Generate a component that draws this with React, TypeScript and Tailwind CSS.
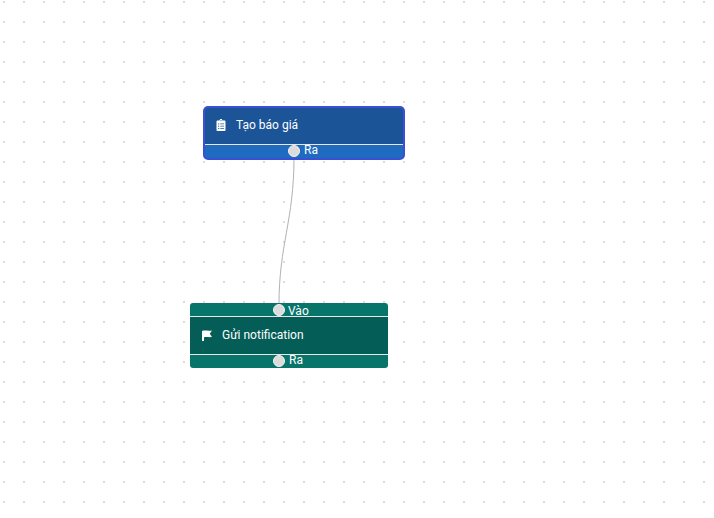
import { FaClipboardList } from "react-icons/fa";

const Handle = ({
  label,
  circleClass = "",
  labelClass = "ml-[4px]",
}: {
  label: string;
  circleClass?: string;
  labelClass?: string;
}) => (
  <div className="flex h-[13px] items-start pl-[83px]">
    <span className={`h-[12px] w-[12px] shrink-0 rounded-full border border-[#f3f3f3] bg-[#dcdcdc] ${circleClass}`} />
    <span className={`text-xs font-[450] leading-[11px] text-white ${labelClass}`}>{label}</span>
  </div>
);

const App = () => {
  return (
    <div className="relative h-[518px] w-[714px] overflow-hidden bg-white bg-[radial-gradient(circle,#dddddd_1px,transparent_1.2px)] bg-[length:20px_20px] bg-[position:-6px_-8px] font-['Roboto',sans-serif]">
      <svg className="absolute left-0 top-0" width="714" height="518">
        <path d="M294 158 C294 220 279 245 279 304" fill="none" stroke="#b1b1b7" strokeWidth="1" />
      </svg>

      <div className="absolute left-[203px] top-[106px] w-[202px] overflow-hidden rounded-[5px] border-2 border-[#3a4fd6] bg-[#1f6bbf]">
        <div className="flex h-[36px] items-center bg-[#1c5498] pb-[2px] pl-[10px] text-xs font-[450] text-white">
          <FaClipboardList className="h-[12px] w-[12px]" />
          <span className="ml-[9px]">Tạo báo giá</span>
        </div>
        <div className="h-[14px] border-t border-[#e8e8e8]">
          <Handle label="Ra" />
        </div>
      </div>

      <div className="absolute left-[190px] top-[303px] w-[198px] overflow-hidden rounded-[3px] bg-[#08756b]">
        <div className="h-[13px]">
          <Handle label="Vào" circleClass="mt-[1px]" labelClass="ml-[3px] mt-[3px]" />
        </div>
        <div className="flex h-[39px] items-center border-y border-[#e8e8e8] bg-[#045d56] pl-[12px] text-xs font-[450] text-white">
          <svg width="10" height="11" viewBox="0 0 10 11" fill="currentColor">
            <path d="M0 1 C3 0 6 1.2 10 0.5 L7.8 3.8 L10 7 C7 7.4 4.5 6.8 2 7.3 L2 11 L0 11 Z" />
          </svg>
          <span className="mb-[2px] ml-[10px]">Gửi notification</span>
        </div>
        <div className="h-[13px]">
          <Handle label="Ra" />
        </div>
      </div>
    </div>
  );
};

export default App;
